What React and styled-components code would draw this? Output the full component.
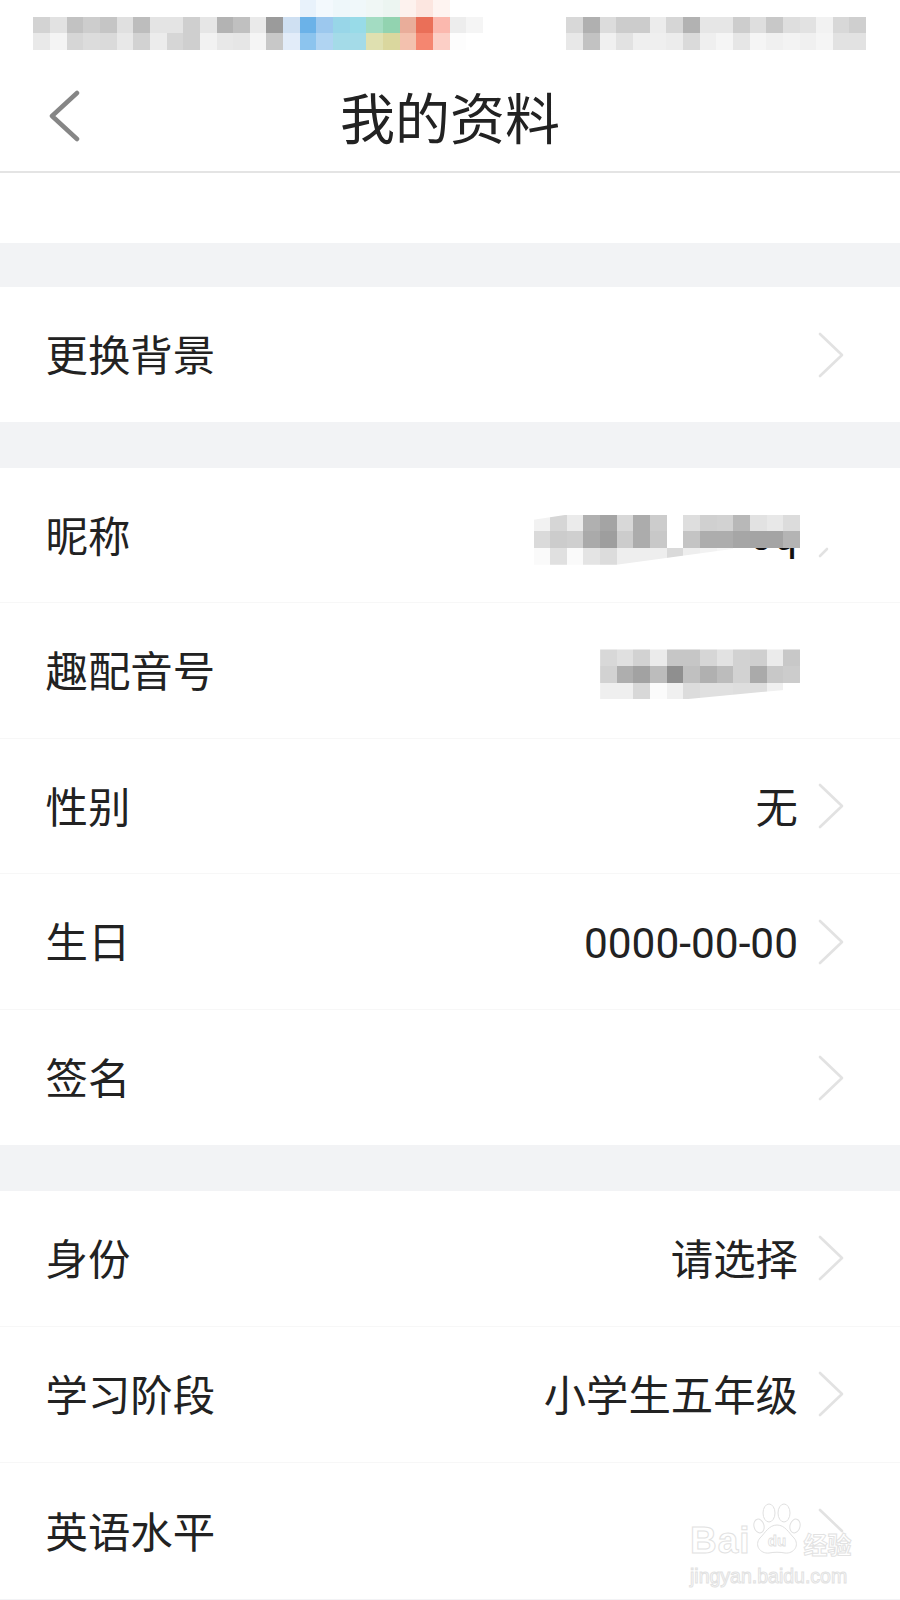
import React from "react";
import styled, { createGlobalStyle } from "styled-components";

const TILE = 16.667;
const CJK = `Roboto, "Noto Sans CJK SC", sans-serif`;

const GlobalStyle = createGlobalStyle`
  html, body {
    margin: 0;
    padding: 0;
    background: #fff;
  }
`;

const _ = "#ffffff";

const carrierTiles = [
  [_, _, _, _, _, _, _, _, _, _, _, _, _, _, _, _, "#e8f2fb", "#f3f9fd", "#eef7fa", "#f0f8fa", "#f0f7f5", "#ecf5f1", "#fdf2ee", "#fce6e0", "#fef4f1", _, _],
  ["#d3d3d3", "#e2e2e2", "#c2c2c2", "#cdcdcd", "#c5c5c5", "#e0e0e0", "#bdbdbd", "#e4e4e4", "#e4e4e4", "#cfcfcf", "#e6e6e6", "#b3b3b3", "#c0c0c0", "#eaeaea", "#9b9b9b", "#cfe0f2", "#6bb2e8", "#9cc8ee", "#98d6e8", "#98dbe8", "#a3dcc2", "#92d3b0", "#e9ad9a", "#ea6f58", "#fbb8ae", "#ededed", "#f5f5f5"],
  ["#e9e9e9", "#f4f4f4", "#d6d6d6", "#dcdcdc", "#dadada", "#e8e8e8", "#d2d2d2", "#ececec", "#d6d6d6", "#cfcfcf", "#f2f2f2", "#e8e8e8", "#e6e6e6", "#f5f5f5", "#c8c8c8", "#e2ecf9", "#8cc4ee", "#b0d4f2", "#a4dbe8", "#a4dbe8", "#dfe0b0", "#dad79e", "#f3c1ae", "#f58670", "#fccfc6", "#fdfdfd", _],
];

const clockTiles = [
  ["#d8d8d8", "#b0b0b0", "#dcdcdc", "#cccccc", "#cccccc", "#ececec", "#d6d6d6", "#b2b2b2", "#e6e6e6", "#e6e6e6", "#cdcdcd", "#dedede", "#c8c8c8", "#dedede", "#e2e2e2", "#f2f2f2", "#d8d8d8", "#cfcfcf"],
  ["#e8e8e8", "#c2c2c2", "#f0f0f0", "#e2e2e2", "#efefef", "#efefef", "#ececec", "#dadada", "#efefef", "#f5f5f5", "#e6e6e6", "#f5f5f5", "#f0f0f0", "#f3f3f3", "#f0f0f0", "#f5f5f5", "#e2e2e2", "#e2e2e2"],
];

const nicknameTiles = [
  ["#f2f2f2", "#d6d6d6", "#ebebeb", "#b0b0b0", "#a4a4a4", "#d8d8d8", "#acacac", "#cccccc", _, "#dedede", "#d0d0d0", "#d2d2d2", "#b8b8b8", "#e2e2e2", "#e8e8e8", "#dcdcdc"],
  ["#dadada", "#cccccc", "#cfcfcf", "#aaaaaa", "#9e9e9e", "#cccccc", "#acacac", "#c8c8c8", _, "#c4c4c4", "#adadad", "#adadad", "#a6a6a6", "#a4a4a4", "#a4a4a4", "#b4b4b4"],
  ["#fafafa", "#e0e0e0", "#fafafa", "#e4e4e4", "#dcdcdc", "#eeeeee", "#eeeeee", "#eeeeee", "#dadada", "#eeeeee", "#f2f2f2", "#f6f6f6", _, _, _, _],
];

const numberTiles = [
  ["#d8d8d8", "#e0e0e0", "#d2d2d2", "#ebebeb", "#c6c6c6", "#c6c6c6", "#d6d6d6", "#e2e2e2", "#d2d2d2", "#cfcfcf", "#ebebeb", "#c8c8c8"],
  ["#d2d2d2", "#aeaeae", "#a2a2a2", "#bcbcbc", "#8f8f8f", "#c0c0c0", "#b0b0b0", "#bcbcbc", "#d2d2d2", "#aaaaaa", "#c8c8c8", "#cccccc"],
  ["#efefef", "#efefef", "#d8d8d8", "#fbfbfb", "#f0f0f0", "#dcdcdc", "#e0e0e0", "#e0e0e0", "#dedede", "#dedede", "#f0f0f0", _],
];

const groups = [
  { gap: 44, rowHeight: 135, rows: [{ label: "更换背景" }] },
  {
    gap: 45.5,
    rowHeight: 135.6,
    rows: [
      { label: "昵称", kind: "nickname", arm: "tail" },
      { label: "趣配音号", kind: "number", arm: "none" },
      { label: "性别", value: "无" },
      { label: "生日", value: "0000-00-00" },
      { label: "签名" },
    ],
  },
  {
    gap: 45.5,
    rowHeight: 136,
    rows: [
      { label: "身份", value: "请选择" },
      { label: "学习阶段", value: "小学生五年级" },
      { label: "英语水平", arm: "upper" },
    ],
  },
];

const chevronPaths = {
  full: "M2 2 L24 23 L2 44",
  upper: "M2 2 L24 23",
  tail: "M2 44 L9 37",
  none: "",
};

const Page = styled.div`
  position: relative;
  width: 900px;
  height: 1600px;
  overflow: hidden;
  background: #fff;
  font-family: ${CJK};
  color: #222;
`;

const StatusBar = styled.div`
  display: flex;
  gap: 83.3px;
  height: 64px;
  padding-left: 33.3px;
`;

const TileGrid = styled.div`
  display: grid;
  grid-template-columns: repeat(${(p) => p.$cols}, ${TILE}px);
  grid-auto-rows: ${TILE}px;
  align-self: flex-start;
  margin-top: ${(p) => p.$top || 0}px;
  background: #fff;
  clip-path: ${(p) => p.$clip || "none"};
  position: relative;
`;

const Tile = styled.i.attrs((p) => ({ style: { background: p.$c } }))`
  display: block;
`;

const Header = styled.header`
  display: grid;
  grid-template-columns: 1fr auto 1fr;
  align-items: center;
  height: 107px;
  padding: 0 48px;
  border-bottom: 2px solid #e4e4e4;
`;

const Title = styled.h1`
  margin: 0;
  padding-top: 5px;
  font-size: 55px;
  font-weight: 400;
  line-height: 1;
  color: #222;
`;

const BackButton = styled.svg`
  display: block;
  width: 32px;
  height: 52px;
  margin-top: -3px;
  fill: none;
  stroke: #868686;
  stroke-width: 4.5;
  stroke-linecap: round;
  stroke-linejoin: round;
`;

const Spacer = styled.div`
  height: 70px;
`;

const Gap = styled.div`
  height: ${(p) => p.$h}px;
  background: #f2f3f5;
`;

const Row = styled.div`
  display: flex;
  align-items: center;
  box-sizing: border-box;
  height: ${(p) => p.$h}px;
  padding: 0 55px 0 45.5px;
  border-bottom: 1px solid #f7f7f7;

  &:last-child {
    border-bottom: none;
  }
`;

const Label = styled.span`
  padding-top: 6px;
  font-size: 42.4px;
  line-height: 1;
`;

const Trailing = styled.div`
  display: flex;
  align-items: center;
  gap: 20px;
  margin-left: auto;
`;

const Value = styled.span`
  padding-top: 6px;
  font-size: 42.4px;
  line-height: 1;
`;

const Redacted = styled.div`
  position: relative;
  margin-right: -2px;
  padding-top: ${(p) => p.$push}px;
`;

const LeftoverText = styled.span`
  position: absolute;
  right: 3px;
  top: 10px;
  font-size: 42px;
  line-height: 1;
  color: #111;
`;

const Chevron = styled.svg`
  flex: none;
  display: block;
  width: 27px;
  height: 46px;
  fill: none;
  stroke: #e2e2e2;
  stroke-width: 2.6;
  stroke-linecap: round;
  stroke-linejoin: round;
`;

const Watermark = styled.div`
  position: absolute;
  left: 690px;
  top: 1500px;
  width: 170px;
  color: #fff;
  -webkit-text-stroke: 1px #e2e2e2;
`;

const LogoLine = styled.div`
  display: flex;
  align-items: flex-end;
  height: 56px;
`;

const Bai = styled.span`
  font-family: "Liberation Sans", sans-serif;
  font-weight: 700;
  font-size: 37px;
  line-height: 38px;
  letter-spacing: 1px;
  margin-bottom: -4px;
`;

const Paw = styled.svg`
  width: 50px;
  height: 54px;
  margin: 0 2px 0 1px;
  fill: #fff;
  stroke: #e0e0e0;
  stroke-width: 1;
`;

const PawText = styled.text`
  font-family: "Liberation Sans", sans-serif;
  font-size: 15px;
  font-weight: 700;
  text-anchor: middle;
  fill: #fff;
  stroke: #e0e0e0;
  stroke-width: 0.8;
`;

const Jing = styled.span`
  font-family: "Noto Sans CJK SC", sans-serif;
  font-size: 24px;
  font-weight: 700;
  line-height: 27px;
  margin-bottom: -1px;
`;

const Domain = styled.div`
  margin-top: 10px;
  font-family: "Liberation Sans", sans-serif;
  font-size: 19.5px;
  line-height: 20px;
  white-space: nowrap;
`;

const Mosaic = ({ tiles, top, clip }) => (
  <TileGrid $cols={tiles[0].length} $top={top} $clip={clip}>
    {tiles.flat().map((c, i) => (
      <Tile key={i} $c={c} />
    ))}
  </TileGrid>
);

const RowValue = ({ row }) => {
  if (row.kind === "nickname") {
    return (
      <Redacted $push={10}>
        <LeftoverText>oq</LeftoverText>
        <Mosaic
          tiles={nicknameTiles}
          clip="polygon(0 5px, 33px 0, 100% 0, 100% 33.3px, 206px 33.3px, 83px 50px, 0 50px)"
        />
      </Redacted>
    );
  }
  if (row.kind === "number") {
    return (
      <Redacted $push={8}>
        <Mosaic
          tiles={numberTiles}
          clip="polygon(0 0, 100% 0, 100% 33.3px, 190px 40px, 83px 50px, 0 50px)"
        />
      </Redacted>
    );
  }
  return row.value ? <Value>{row.value}</Value> : null;
};

const App = () => (
  <Page>
    <GlobalStyle />
    <StatusBar>
      <Mosaic tiles={carrierTiles} />
      <Mosaic tiles={clockTiles} top={TILE} />
    </StatusBar>
    <Header>
      <BackButton viewBox="0 0 32 52">
        <path d="M29 3 L4 26 L29 49" />
      </BackButton>
      <Title>我的资料</Title>
    </Header>
    <Spacer />
    {groups.map((group) => (
      <React.Fragment key={group.rows[0].label}>
        <Gap $h={group.gap} />
        <section>
          {group.rows.map((row) => (
            <Row key={row.label} $h={group.rowHeight}>
              <Label>{row.label}</Label>
              <Trailing>
                <RowValue row={row} />
                <Chevron viewBox="0 0 27 46">
                  <path d={chevronPaths[row.arm || "full"]} />
                </Chevron>
              </Trailing>
            </Row>
          ))}
        </section>
      </React.Fragment>
    ))}
    <Gap $h={3} />
    <Watermark>
      <LogoLine>
        <Bai>Bai</Bai>
        <Paw viewBox="0 0 50 54">
          <ellipse cx="7" cy="24" rx="5" ry="7" transform="rotate(-15 7 24)" />
          <ellipse cx="17" cy="11" rx="6" ry="9" />
          <ellipse cx="32" cy="11" rx="6" ry="9" />
          <ellipse cx="43" cy="24" rx="5" ry="7" transform="rotate(15 43 24)" />
          <path d="M25 23 C33 23 37 31 42 36 C48 43 42 52 33 51 C28 50 22 50 17 51 C8 52 2 43 8 36 C13 31 17 23 25 23 Z" />
          <PawText x="25" y="44">du</PawText>
        </Paw>
        <Jing>经验</Jing>
      </LogoLine>
      <Domain>jingyan.baidu.com</Domain>
    </Watermark>
  </Page>
);

export default App;
